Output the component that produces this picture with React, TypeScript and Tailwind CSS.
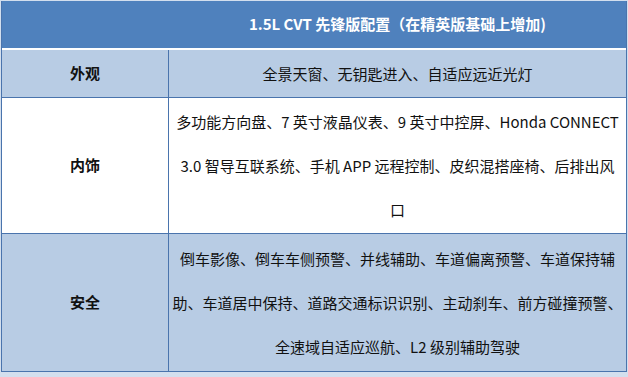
import React from 'react';

// Spec table: trim package additions
const rows = [
  {
    label: '外观',
    lines: ['全景天窗、无钥匙进入、自适应远近光灯'],
    bg: 'bg-[#b8cce4]',
    height: 'h-[47px]',
  },
  {
    label: '内饰',
    lines: [
      '多功能方向盘、7 英寸液晶仪表、9 英寸中控屏、Honda CONNECT',
      '3.0 智导互联系统、手机 APP 远程控制、皮织混搭座椅、后排出风',
      '口',
    ],
    bg: 'bg-white',
    height: 'h-[135px]',
  },
  {
    label: '安全',
    lines: [
      '倒车影像、倒车车侧预警、并线辅助、车道偏离预警、车道保持辅',
      '助、车道居中保持、道路交通标识识别、主动刹车、前方碰撞预警、',
      '全速域自适应巡航、L2 级别辅助驾驶',
    ],
    bg: 'bg-[#b8cce4]',
    height: 'h-[137px]',
  },
];

const App: React.FC = () => {
  return (
    <div
      className="w-[628px] h-[377px] bg-[#d3dfee] pl-[1px] pt-[1px] overflow-hidden"
      style={{ fontFamily: '"Noto Sans CJK SC", "Noto Sans", sans-serif' }}
    >
      <div className="w-[626px] border-l border-r border-[#4a74ad]">
        {/* Header */}
        <div className="grid grid-cols-[167px_1fr] h-[47px] bg-[#4f81bd] border-b-2 border-white box-content">
          <div />
          <div className="flex items-center justify-center text-white font-bold text-[15px] whitespace-nowrap">
            1.5L CVT 先锋版配置（在精英版基础上增加)
          </div>
        </div>

        {/* Body rows */}
        {rows.map((row) => (
          <div
            key={row.label}
            className={`grid grid-cols-[167px_1fr] ${row.height} ${row.bg} border-b border-[#4a74ad] box-content`}
          >
            <div className="flex items-center justify-center border-r border-[#4a74ad] font-bold text-[15px] text-[#111]">
              {row.label}
            </div>
            <div className="flex flex-col items-center justify-center text-[15px] leading-[44px] text-[#111]">
              {row.lines.map((line, i) => (
                <span key={i} className="whitespace-nowrap">
                  {line}
                </span>
              ))}
            </div>
          </div>
        ))}
      </div>
    </div>
  );
};

export default App;
